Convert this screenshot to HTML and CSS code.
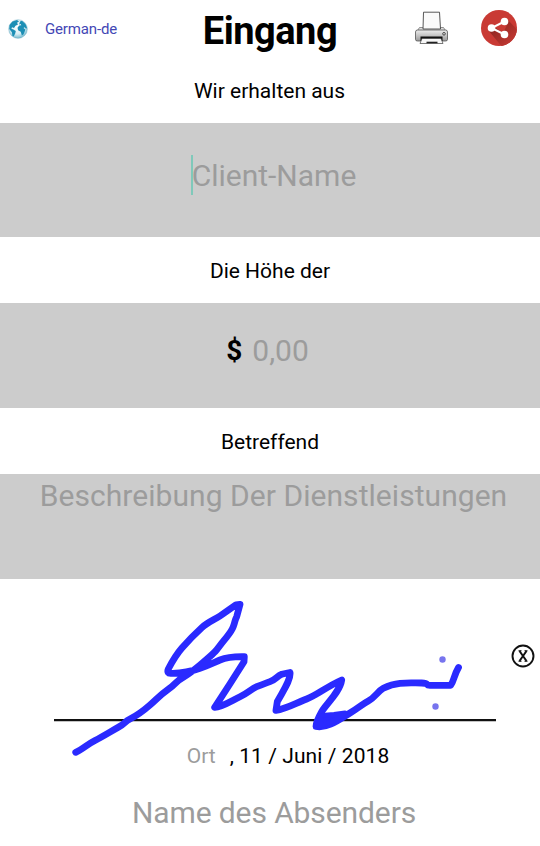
FILE: index.html
```html
<!DOCTYPE html>
<html lang="de">
<head>
<meta charset="utf-8">
<title>Eingang</title>
<link rel="stylesheet" href="styles.css">
</head>
<body>
<header class="topbar">
  <div class="language">
    <svg class="globe" viewBox="0 0 20 20">
      <defs><radialGradient id="sea" cx=".45" cy=".35" r=".7"><stop offset="0" stop-color="#fff"/><stop offset=".6" stop-color="#d9eef4"/><stop offset="1" stop-color="#5fb0c8"/></radialGradient></defs>
      <circle cx="10" cy="10" r="9.3" fill="url(#sea)" stroke="#6eafc4" stroke-width=".5"/>
      <path fill="#1d8fb5" d="M1.500 6 4.500 2.500 9 1l2 1.500-2 1.300 1 1.700-2.500 1.300L6 9l-2-.7-.6 1.500 2 .8 2.400 1.300-.5 2.400-1.600 3.200-1.300-.6-.5-3.700L1.200 10zM12 2.600l2-.9 3.500 3.200 1.500 4-1 .8-1.300-1.500-1.200.7 1.800 1.500-.5 1.900-1.200 3-1.700 1.100-1.200-3.600-2.600-1.500-.6-2.500 1.700-2.200 2.100-.4-.6-1.300-1.600.5z"/>
    </svg>
    <span class="language-name">German-de</span>
  </div>
  <h1 class="title">Eingang</h1>
  <div class="actions">
    <svg class="printer" viewBox="0 0 34 34">
      <defs><linearGradient id="body" x2="0" y2="1"><stop stop-color="#eee"/><stop offset=".5" stop-color="#c4c4c4"/><stop offset="1" stop-color="#999"/></linearGradient></defs>
      <path d="M5 16.500h24l3 4.500H2z" fill="#ddd" stroke="#777" stroke-width=".8"/>
      <path d="M8.500 18 9 1.200h16L26 18z" fill="#fafafa" stroke="#444" stroke-width=".9"/>
      <path d="M3 19h28q2 0 2 2v7.500q0 1.500-2 1.500H3q-2 0-2-1.500V21q0-2 2-2z" fill="url(#body)" stroke="#555" stroke-width=".8"/>
      <path d="M6 25.500h22V30H6z" fill="#111"/>
      <path d="M7.500 27.500h19l2 5H5.500z" fill="#f7f7f7" stroke="#444" stroke-width=".7"/>
      <path d="M12 31.500h11" stroke="#222" stroke-width="1.600"/>
      <circle cx="29.500" cy="22.800" r="1.300" fill="#eee" stroke="#222" stroke-width=".8"/>
    </svg>
    <svg class="share" viewBox="0 0 36 36">
      <defs>
        <clipPath id="disc"><circle cx="18" cy="18" r="18"/></clipPath>
        <linearGradient id="shade" x2="1" y2="1"><stop offset=".2" stop-color="#8e2621"/><stop offset=".8" stop-color="#c23832"/></linearGradient>
      </defs>
      <circle cx="18" cy="18" r="18" fill="#c93a34"/>
      <path clip-path="url(#disc)" fill="url(#shade)" d="M26 9 38 21.500V38H22L7.500 20.500 15 18l7 5 4-8z"/>
      <path d="M23.500 11.500 10.500 18l13 6.500" fill="none" stroke="#fff" stroke-width="2"/>
      <g fill="#fff"><circle cx="23.500" cy="11.500" r="3.800"/><circle cx="10.500" cy="18" r="3.800"/><circle cx="23.500" cy="24.500" r="3.800"/></g>
    </svg>
  </div>
</header>
<main>
  <h2 class="label label-first">Wir erhalten aus</h2>
  <div class="field field-client"><span class="caret"></span><span class="hint">Client-Name</span></div>
  <h2 class="label">Die Höhe der</h2>
  <div class="field field-amount"><span class="currency">$</span><span class="hint">0,00</span></div>
  <h2 class="label">Betreffend</h2>
  <div class="field field-description"><span class="hint hint-description">Beschreibung Der Dienstleistungen</span></div>
  <section class="signature">
    <svg class="ink" viewBox="0 579 540 158">
      <path d="M54 720.200H496" stroke="#111" stroke-width="2.200"/>
      <g fill="none" stroke="#2a2aff" stroke-width="6.800" stroke-linecap="round" stroke-linejoin="round">
        <path d="M75.700 752.300C83 749 88 744 95 740.500S110 732 118.300 727.300 124 722 130 719 142 712 150 705 159 696 168.300 689.300 175 682 183.300 677.300 198 667 206.700 659.300 216 651 221.700 643.300 231 633 233.300 626.700 234.500 621 236.700 616.700L240 604.300 236 604.800C230 609 226 612 220 616S208 622 201.700 627.700 188 641 181.700 648.300 173 660 168.300 669Q166.500 673.500 171 673.300C181 673.500 190 672 200 668.300S214 662.500 220 660 235 656.500 244.300 656.700L244 661.700Q230 684 214.700 707.300C220 708 231 701 240 696.700S251 689 256.700 686.700 264 684 270 681.700 277 676 281.700 674.300L290 672.500C291 680 283 691 277.300 701.700L276 710.300C286 709 296 703 306.700 699S326 687 341.700 680C340 692 326 704 321.700 711.700S316 723 316 726.500C327 729 340 719 350 713S361 705 368.300 701 378 691 383.300 688.300 393 684 400 683.300 414 683 421.700 683 425 685.300 430 685.300H450.700C454 681 454 675 458.500 667.500"/>
        <path fill="#2a2aff" d="M322 715.500 334 714.500 345 713Q330 724 319 726Z" stroke-width="5"/>
      </g>
      <g fill="#7774ee"><circle cx="442.500" cy="659.500" r="3.200"/><circle cx="435.500" cy="706.500" r="3.200"/></g>
    </svg>
    <svg class="clear" viewBox="0 0 24 24">
      <circle cx="12" cy="12" r="10.500" fill="#fff" stroke="#111" stroke-width="1.900"/>
      <path d="M8.500 7 15.500 17M15.500 7 8.500 17" stroke="#111" stroke-width="2"/>
      <path d="M7.500 6.800h3M13.500 6.800h3M7.500 17.200h3M13.500 17.200h3" stroke="#111" stroke-width="1.100"/>
    </svg>
    <div class="place-date"><span class="place">Ort</span><span class="date">, 11 / Juni / 2018</span></div>
    <div class="sender">Name des Absenders</div>
  </section>
</main>
</body>
</html>
```
FILE: styles.css
```css
* { box-sizing: border-box; }

body {
  margin: 0;
  width: 540px;
  height: 846px;
  overflow: hidden;
  background: #fff;
  color: #000;
  font-family: Roboto, "Liberation Sans", sans-serif;
}

.topbar {
  height: 60px;
  display: grid;
  grid-template-columns: 180px 180px 180px;
  align-items: start;
}

.language {
  display: flex;
  align-items: center;
  gap: 17px;
  height: 57px;
  padding-left: 8px;
  color: #4347b5;
  font-size: 15px;
}

.language-name { letter-spacing: -0.15px; }

.globe { width: 20px; height: 20px; }

.title {
  margin: 0;
  line-height: 62px;
  text-align: center;
  font-size: 38px;
  font-weight: 700;
  letter-spacing: -0.5px;
}

.actions {
  display: flex;
  align-items: center;
  height: 56px;
  gap: 32px;
  padding-left: 54px;
}

.printer { width: 35px; height: 34px; }
.share { width: 36px; height: 36px; }

.label {
  margin: 0;
  height: 66px;
  line-height: 69px;
  text-align: center;
  font-size: 21px;
  font-weight: 400;
}

.label-first { height: 63px; line-height: 62px; padding-right: 1px; }

.field {
  display: flex;
  justify-content: center;
  background: #ccc;
  font-size: 30px;
}

.hint { color: #9c9c9c; }

.field-client { height: 114px; line-height: 106px; padding-left: 6px; }

.caret {
  width: 2px;
  height: 40px;
  margin: 32px -1px 0 1px;
  background: #7fc9ba;
}

.field-amount { height: 105px; line-height: 96px; gap: 10px; padding-right: 5px; }

.currency { font-size: 28px; font-weight: 700; }

.field-description { height: 105px; line-height: 44px; padding-left: 7px; }

.hint-description { white-space: nowrap; letter-spacing: 0.05px; }

.signature { position: relative; }

.ink {
  display: block;
  width: 540px;
  height: 158px;
  overflow: visible;
}

.clear {
  position: absolute;
  top: 65px;
  right: 5px;
  width: 24px;
  height: 24px;
}

.place-date {
  display: flex;
  justify-content: center;
  gap: 14px;
  height: 38px;
  line-height: 38px;
  padding-left: 36px;
  font-size: 21px;
}

.place { color: #9c9c9c; }

.date { letter-spacing: 0.08px; }

.sender {
  height: 71px;
  line-height: 75px;
  padding-left: 8px;
  text-align: center;
  font-size: 30px;
  letter-spacing: -0.1px;
  color: #9c9c9c;
}
```
